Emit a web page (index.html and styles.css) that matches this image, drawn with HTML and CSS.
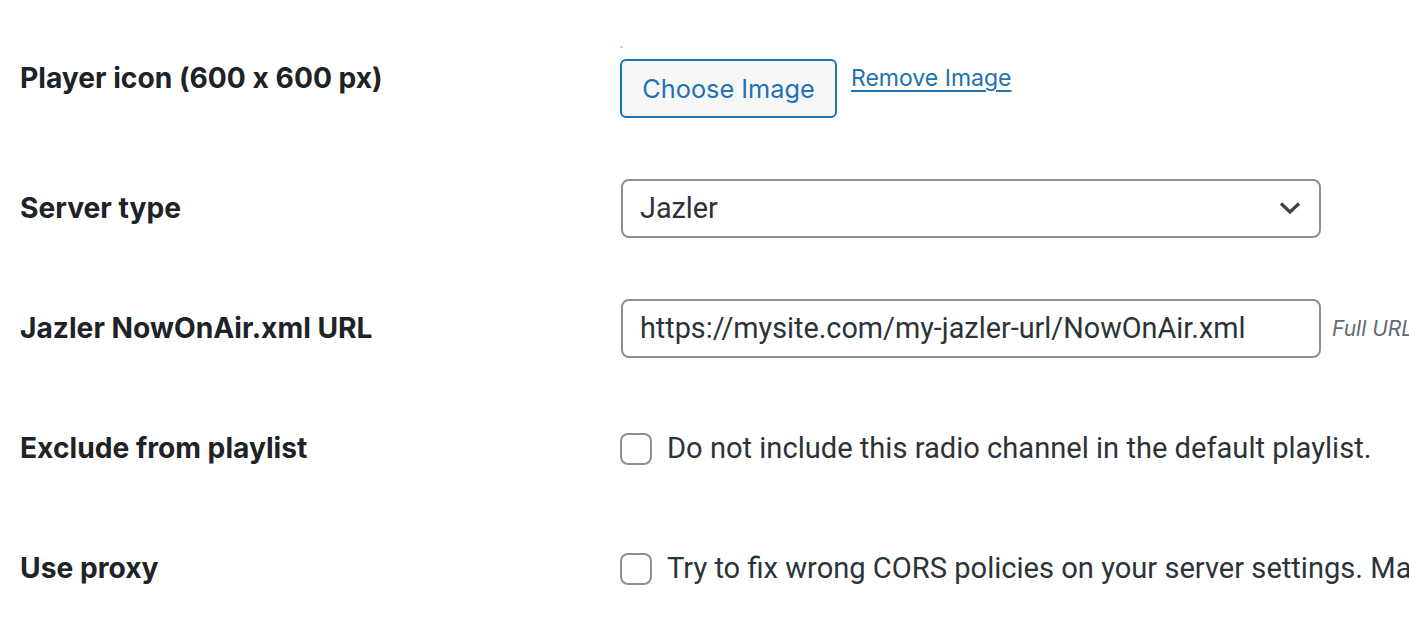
FILE: index.html
```html
<!DOCTYPE html>
<html>
<head>
<meta charset="utf-8">
<link rel="stylesheet" href="styles.css">
</head>
<body>
<div class="form">
  <div class="row row-top">
    <div class="label">Player icon (600 x 600 px)</div>
    <div class="field image-field">
      <span class="preview"></span>
      <button class="btn">Choose Image</button>
      <a class="link" href="#">Remove Image</a>
    </div>
  </div>
  <div class="row">
    <div class="label">Server type</div>
    <div class="field">
      <div class="select">
        <span class="select-value">Jazler</span>
        <svg class="chevron" width="22" height="14" viewBox="0 0 22 14"><path d="M2 2.5 L11 11 L20 2.5" fill="none" stroke="#3c434a" stroke-width="3.2"/></svg>
      </div>
    </div>
  </div>
  <div class="row">
    <div class="label">Jazler NowOnAir.xml URL</div>
    <div class="field">
      <div class="input">https://mysite.com/my-jazler-url/NowOnAir.xml</div>
      <span class="hint">Full URL</span>
    </div>
  </div>
  <div class="row">
    <div class="label">Exclude from playlist</div>
    <div class="field">
      <span class="checkbox"></span>
      <span class="check-text">Do not include this radio channel in the default playlist.</span>
    </div>
  </div>
  <div class="row">
    <div class="label">Use proxy</div>
    <div class="field">
      <span class="checkbox"></span>
      <span class="check-text">Try to fix wrong CORS policies on your server settings. Ma</span>
    </div>
  </div>
</div>
</body>
</html>
```

FILE: styles.css
```css
html, body {
  margin: 0;
  padding: 0;
  background: #ffffff;
  overflow: hidden;
}
body {
  width: 1409px;
  height: 640px;
  font-family: Inter, "Noto Sans", sans-serif;
  font-feature-settings: "calt" 0;
  color: #1d2327;
}
.form {
  padding: 28px 0 0 20px;
}
.row {
  display: grid;
  grid-template-columns: 600px 1fr;
  height: 120px;
  align-items: center;
}
.label {
  font-size: 28.2px;
  font-weight: 700;
  line-height: 40px;
  white-space: nowrap;
}
.row-top {
  align-items: start;
}
.row-top .label {
  margin-top: 30px;
}
.field {
  display: flex;
  align-items: center;
  white-space: nowrap;
  min-width: 0;
  overflow: hidden;
}
.image-field {
  position: relative;
  align-items: flex-start;
  padding-top: 31px;
}
.preview {
  position: absolute;
  left: 0;
  top: 18px;
  width: 3px;
  height: 2px;
  background: #f2c9a8;
}
.btn {
  box-sizing: border-box;
  flex: none;
  width: 217px;
  height: 59px;
  border: 2px solid #2271b1;
  border-radius: 6px;
  background: #f6f7f7;
  color: #2271b1;
  font-family: Inter, "Noto Sans", sans-serif;
  font-size: 25.3px;
  padding: 0;
  margin: 0;
}
.link {
  margin-left: 14px;
  margin-top: 1px;
  color: #2271b1;
  font-size: 23px;
  line-height: 36px;
  text-decoration: underline;
  text-underline-offset: 4px;
  text-decoration-thickness: 2px;
}
.select, .input {
  box-sizing: border-box;
  flex: none;
  width: 700px;
  height: 59px;
  border: 2px solid #8c8f94;
  border-radius: 8px;
  background: #fff;
  display: flex;
  align-items: center;
  font-family: Roboto, "Noto Sans", sans-serif;
  font-size: 28.8px;
  color: #2c3338;
  padding: 0 17px;
  margin-left: 1px;
}
.select {
  justify-content: space-between;
  padding-right: 18px;
}
.hint {
  margin-left: 11px;
  font-style: italic;
  font-size: 21px;
  color: #646970;
  font-family: Inter, "Noto Sans", sans-serif;
}
.checkbox {
  box-sizing: border-box;
  width: 32px;
  height: 32px;
  border: 2px solid #8c8f94;
  border-radius: 8px;
  background: #fff;
  flex: none;
  margin-top: 2px;
}
.check-text {
  margin-left: 15px;
  font-family: Roboto, "Noto Sans", sans-serif;
  font-size: 29.1px;
  color: #2c3338;
}
```
